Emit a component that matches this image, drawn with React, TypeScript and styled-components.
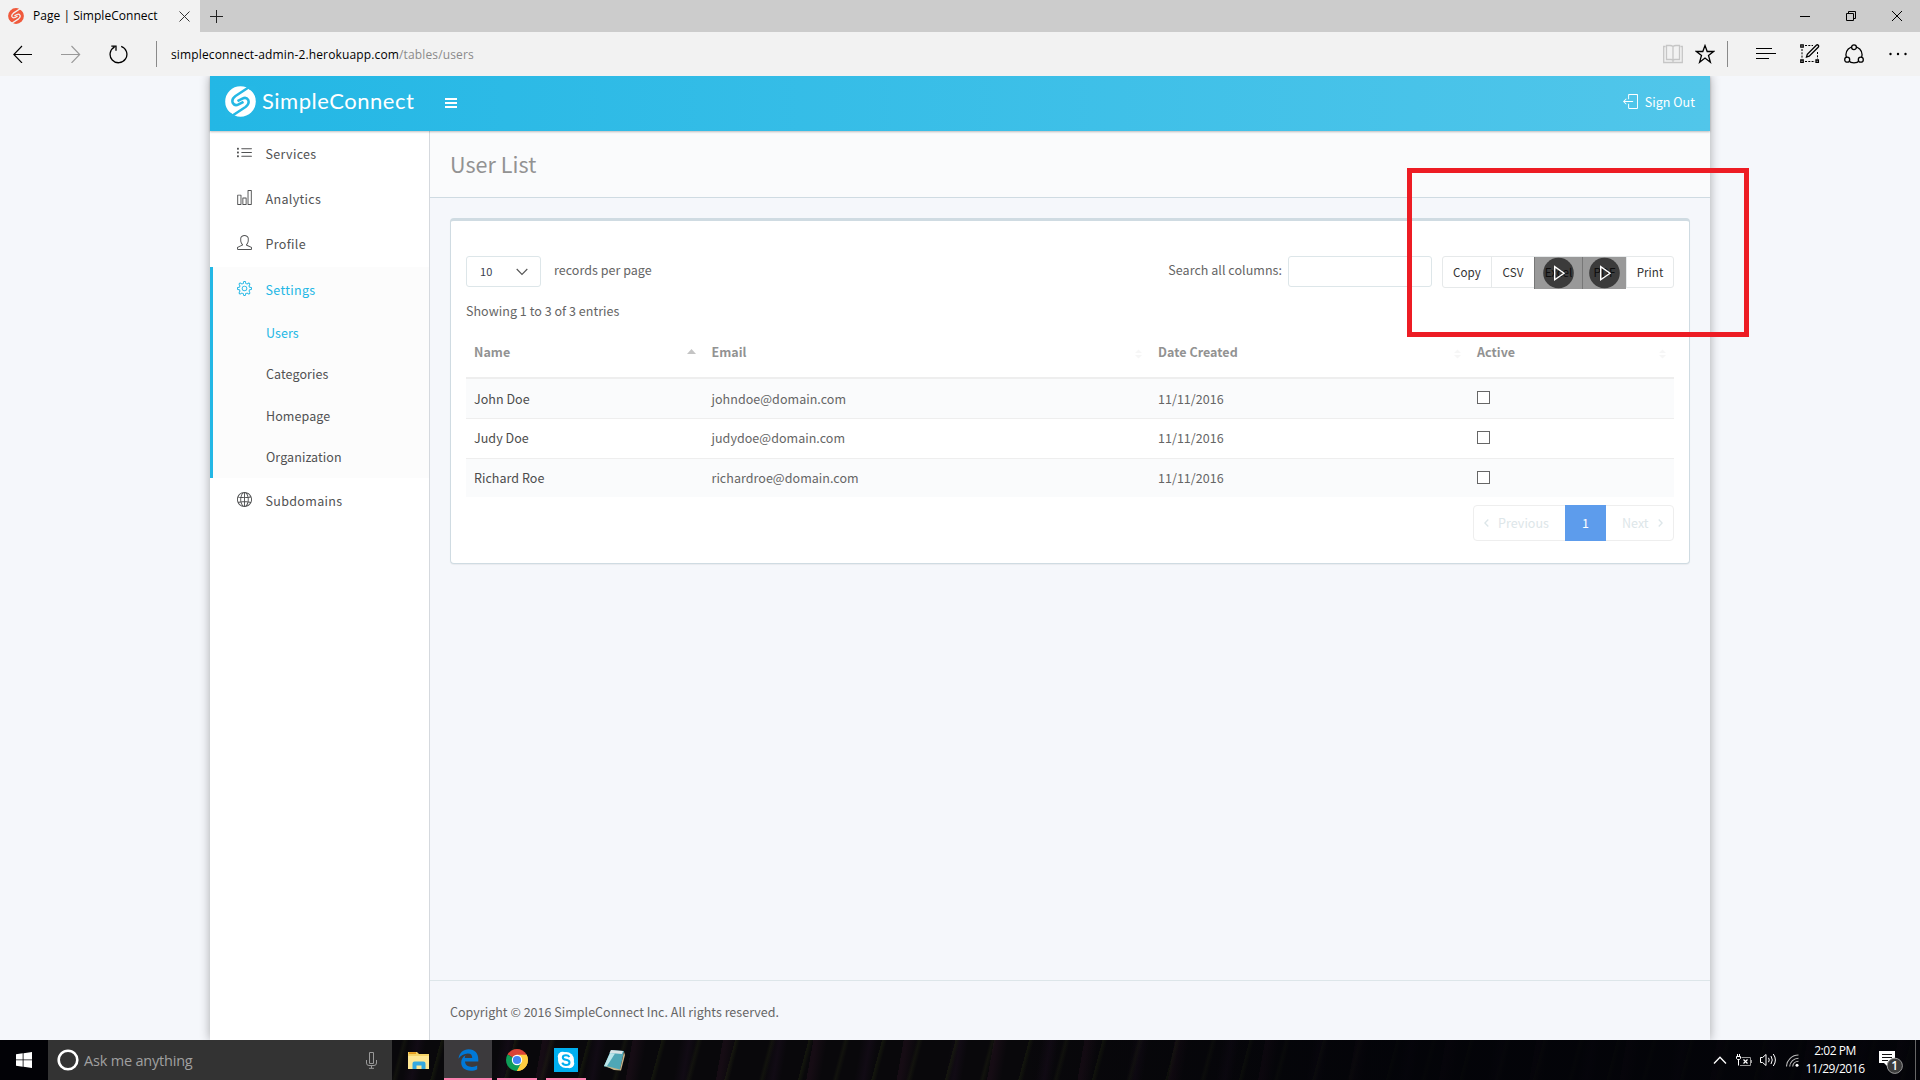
import styled, { createGlobalStyle } from 'styled-components';
import {
    SlChart,
    SlGlobe,
    SlList,
    SlLogout,
    SlSettings,
    SlUser
} from 'react-icons/sl';

const SOURCE_FONT = "'Noto Sans CJK SC', 'Open Sans', sans-serif";
const SYSTEM_FONT = "'Open Sans', 'Noto Sans', sans-serif";
const ACCENT = '#23b7e5';

const GlobalStyle = createGlobalStyle`
    * {
        box-sizing: border-box;
    }

    body {
        margin: 0;
        overflow: hidden;
        background: #f5f7fa;
    }

    svg {
        display: block;
        flex: none;
    }
`;

const Screen = styled.div`
    position: relative;
    display: flex;
    flex-direction: column;
    width: 1920px;
    height: 1080px;
    overflow: hidden;
`;

/* browser chrome */

const TitleBar = styled.div`
    display: flex;
    height: 32px;
    flex: none;
    background: #ccc;
`;

const Tab = styled.div`
    display: flex;
    align-items: center;
    width: 200px;
    padding-left: 8px;
    background: #f2f2f2;
    font: 12px/34px ${SYSTEM_FONT};
    letter-spacing: 0.03px;
    color: #000;
`;

const TabTitle = styled.span`
    width: 146px;
    margin-left: 9px;
    white-space: nowrap;
`;

const NewTab = styled.div`
    padding: 10px 0 0 10px;
`;

const WindowButtons = styled.div`
    display: flex;
    align-items: center;
    gap: 36px;
    margin-left: auto;
    padding-right: 18px;
`;

const Toolbar = styled.div`
    display: flex;
    align-items: center;
    height: 44px;
    flex: none;
    padding: 0 13px;
    background: #f2f2f2;
`;

const NavButtons = styled.div`
    display: flex;
    align-items: center;
    gap: 28px;
`;

const Divider = styled.div`
    width: 1px;
    height: 26px;
    background: #8a8a8a;
`;

const Address = styled.div`
    padding: 1px 0 0 14px;
    font: 12px/20px ${SYSTEM_FONT};
    letter-spacing: 0.14px;
    color: #000;
`;

const AddressPath = styled.span`
    color: #8a8a8a;
`;

const ToolbarActions = styled.div`
    display: flex;
    align-items: center;
    margin-left: auto;
`;

const Action = styled.div<{ $gap: number }>`
    margin-left: ${({ $gap }) => $gap}px;
`;

/* page */

const Page = styled.div`
    display: flex;
    justify-content: center;
    height: 964px;
    overflow: hidden;
    background: #f5f7fb;
    font: 12.5px/20px ${SOURCE_FONT};
    letter-spacing: 0.04px;
    color: #656565;
`;

const Wrapper = styled.div`
    display: flex;
    flex-direction: column;
    width: 1500px;
    box-shadow: 0 0 10px rgba(0, 0, 0, 0.32);
`;

const TopNav = styled.header`
    position: relative;
    display: flex;
    align-items: center;
    height: 55px;
    flex: none;
    padding: 0 15px 2px;
    background: linear-gradient(to right, #23b7e5, #51c6ea);
    box-shadow: 0 1px 2px rgba(0, 0, 0, 0.25);
    color: #fff;
`;

const Brand = styled.div`
    display: flex;
    align-items: center;
    width: 220px;
    padding-bottom: 3px;
    gap: 6px;
    font: 22px/30px Lato, sans-serif;
    letter-spacing: 0.5px;
`;

const SignOut = styled.div`
    display: flex;
    align-items: center;
    gap: 7px;
    margin-left: auto;
    padding-bottom: 2px;
`;

const Body = styled.div`
    display: flex;
    flex: 1;
`;

const Sidebar = styled.nav`
    width: 220px;
    border-right: 1px solid #d5d9de;
    background: #fff;
    color: #515253;
    letter-spacing: 0.33px;
`;

const MenuItem = styled.div<{ $active?: boolean }>`
    display: flex;
    align-items: center;
    height: 45px;
    padding-left: ${({ $active }) => ($active ? 24 : 27)}px;
    gap: 13.5px;
    color: ${({ $active }) => ($active ? ACCENT : 'inherit')};

    svg {
        margin-bottom: 2px;
    }
`;

const MenuGroup = styled.div`
    margin-top: 1px;
    height: 211px;
    border-left: 3px solid ${ACCENT};
    background: #fcfcfc;
`;

const SubItem = styled.div<{ $active?: boolean }>`
    height: 41.4px;
    padding-left: 53px;
    line-height: 41.2px;
    letter-spacing: 0.08px;
    color: ${({ $active }) => ($active ? ACCENT : 'inherit')};
`;

const Content = styled.main`
    display: flex;
    flex: 1;
    flex-direction: column;
    background: #f5f7fb;
`;

const Heading = styled.h1`
    height: 67px;
    margin: 0;
    padding-left: 20px;
    border-bottom: 1px solid #cfdbe2;
    background: #fafbfc;
    font: 21.5px/66px ${SOURCE_FONT};
    letter-spacing: 0.06px;
    color: #929292;
`;

const Card = styled.section`
    height: 346px;
    margin: 20px 20px 0;
    padding: 35px 15px 0;
    border: 1px solid #cfdbe2;
    border-top-width: 3px;
    border-radius: 4px;
    background: #fff;
    box-shadow: 0 1px 1px rgba(0, 0, 0, 0.05);
`;

const Controls = styled.div`
    display: flex;
    height: 33px;
`;

const Select = styled.div`
    display: flex;
    align-items: center;
    justify-content: space-between;
    width: 75px;
    height: 31px;
    padding: 0 12px 2px 13px;
    border: 1px solid #dde6e9;
    border-radius: 3px;
    font-size: 11px;
    color: #3a3f51;

    svg {
        margin-top: 2px;
    }
`;

const ControlLabel = styled.span`
    line-height: 28px;
    white-space: nowrap;

    &:first-of-type {
        margin: 0 auto 0 13px;
    }
`;

const SearchInput = styled.input`
    width: 144px;
    height: 31px;
    margin: 0 10px 0 6px;
    border: 1px solid #dde6e9;
    border-radius: 3px;
`;

const ButtonGroup = styled.div`
    display: flex;
    height: 32px;
    border: 1px solid #e6e9ea;
    border-radius: 3px;
`;

const ExportButton = styled.div<{ $width: number; $blocked?: boolean }>`
    position: relative;
    width: ${({ $width }) => $width}px;
    height: ${({ $blocked }) => ($blocked ? 32 : 30)}px;
    border-left: 1px solid ${({ $blocked }) => ($blocked ? '#777' : '#e6e9ea')};
    background: ${({ $blocked }) => ($blocked ? '#999' : 'none')};
    font-size: 11.6px;
    line-height: 31px;
    text-align: center;
    color: ${({ $blocked }) => ($blocked ? '#000' : '#333')};

    &:first-child {
        border-left: 0;
    }
`;

const PlayOverlay = styled.svg`
    position: absolute;
    top: 0;
    left: 50%;
    margin-left: -15.5px;
`;

const Info = styled.div`
    height: 41px;
    padding-top: 12px;
`;

const Row = styled.div<{ $striped?: boolean }>`
    display: grid;
    grid-template-columns: 237.5px 446.5px 319px 205px;
    height: 40px;
    border-bottom: 1px solid #eee;
    background: ${({ $striped }) => ($striped ? '#fafbfc' : '#fff')};
    line-height: 39px;

    & + & {
        line-height: 37px;
    }

    &:last-child {
        height: 38px;
        border-bottom: 0;
    }
`;

const HeaderRow = styled.div`
    display: grid;
    grid-template-columns: 237.5px 446.5px 319px 205px;
    height: 49px;
    border-bottom: 2px solid #eee;
    line-height: 44px;
    font-weight: 700;
    color: #929292;
`;

const Cell = styled.div<{ $dark?: boolean }>`
    display: flex;
    justify-content: space-between;
    padding: 0 8px;
    color: ${({ $dark }) => ($dark ? '#4c4c4c' : 'inherit')};
`;

const SortIcon = styled.svg`
    margin-top: 17px;
`;

const Checkbox = styled.div`
    width: 13px;
    height: 13px;
    margin-top: 12px;
    border: 1px solid #666;
    background: #fff;
`;

const Pagination = styled.div`
    display: flex;
    width: 201px;
    height: 36px;
    margin: 8px 0 0 auto;
    border: 1px solid #eee;
    border-radius: 4px;
    line-height: 34px;
    color: #dde6e9;
`;

const PageLink = styled.div<{ $width: number }>`
    display: flex;
    width: ${({ $width }) => $width}px;
    align-items: center;
    justify-content: space-between;
    padding: 0 16px 0 10px;

    &:last-child {
        padding: 0 10px 0 16px;
    }
`;

const CurrentPage = styled.div`
    width: 41px;
    margin: -1px 0;
    background: #5d9cec;
    line-height: 36px;
    text-align: center;
    color: #fff;
`;

const Footer = styled.footer`
    height: 60px;
    margin-top: auto;
    padding: 21px 20px;
    border-top: 1px solid #dde6e9;
    letter-spacing: 0.02px;
`;

const Highlight = styled.div`
    position: absolute;
    top: 168px;
    left: 1407px;
    width: 342px;
    height: 169px;
    border: 5px solid #ed1c24;
`;

/* taskbar */

const Taskbar = styled.div`
    display: flex;
    height: 40px;
    background:
        linear-gradient(to right, transparent 1000px, rgba(2, 3, 8, 0.8) 1400px),
        repeating-linear-gradient(
            105deg,
            rgba(48, 60, 18, 0.24) 0 1px,
            transparent 5px 33px,
            rgba(52, 60, 22, 0.2) 36px,
            transparent 40px 71px
        ),
        repeating-linear-gradient(
            100deg,
            rgba(58, 24, 46, 0.26) 0 3px,
            transparent 14px 47px,
            rgba(44, 20, 50, 0.24) 56px,
            transparent 64px 89px
        ),
        #09080b;
    font-family: ${SYSTEM_FONT};
`;

const StartButton = styled.div`
    width: 48px;
    padding: 12px 16px;
    background: #020206;
`;

const SearchBox = styled.div`
    display: flex;
    align-items: center;
    width: 344px;
    padding: 0 15px 0 8px;
    background: #333;
    font-size: 14.5px;
    letter-spacing: -0.2px;
    color: #a0a0a0;

    svg:last-child {
        margin-left: auto;
    }
`;

const SearchText = styled.span`
    margin-left: 4px;
    white-space: nowrap;
`;

const AppButton = styled.div<{ $width: number; $gap?: number; $open?: boolean; $focused?: boolean }>`
    display: flex;
    align-items: center;
    justify-content: center;
    width: ${({ $width }) => $width}px;
    margin-left: ${({ $gap = 0 }) => $gap}px;
    border-bottom: 2px solid ${({ $open }) => ($open ? '#fb80ae' : 'transparent')};
    background: ${({ $focused }) => ($focused ? '#3c3a3d' : 'none')};
    background-clip: padding-box;
    padding-top: 2px;
`;

const Tray = styled.div`
    display: flex;
    align-items: center;
    margin-left: auto;
    color: #fff;
`;

const Clock = styled.div`
    width: 62px;
    margin: 0 13px 0 5px;
    font-size: 12px;
    line-height: 18px;
    letter-spacing: -0.45px;
    text-align: center;
    white-space: nowrap;
`;

const ShowDesktop = styled.div`
    width: 5px;
    height: 40px;
    margin-left: 12px;
    border-left: 1px solid #666;
`;

const Logo = ({ size, color, gap }: { size: number; color: string; gap: string }) => (
    <svg width={size} height={size} viewBox="0 0 31 31">
        <circle cx="15.5" cy="15.5" r="15.3" fill={color} />
        <g fill="none" stroke={gap} strokeWidth="2.5" strokeLinejoin="round">
            <path d="M25 .5 L10.5 10 Q6.2 13.2 7.8 17 Q9.8 20.4 13.6 18.4 L18.5 15.8" />
            <path d="M6 30.5 L20.5 21 Q24.8 17.8 23.2 14 Q21.2 10.6 17.4 12.6 L12.5 15.2" />
        </g>
        <path d="M20 0 H31 V10 Q28 5 24.5 3.8 Z M11 31 H0 V21 Q3 26 6.5 27.2 Z" fill={gap} />
    </svg>
);

const menu = [
    { label: 'Services', Icon: SlList },
    { label: 'Analytics', Icon: SlChart },
    { label: 'Profile', Icon: SlUser }
];

const settings = ['Users', 'Categories', 'Homepage', 'Organization'];

const columns = ['Name', 'Email', 'Date Created', 'Active'];

const users = [
    { name: 'John Doe', email: 'johndoe@domain.com', created: '11/11/2016' },
    { name: 'Judy Doe', email: 'judydoe@domain.com', created: '11/11/2016' },
    { name: 'Richard Roe', email: 'richardroe@domain.com', created: '11/11/2016' }
];

const exportButtons = [
    { label: 'Copy', width: 48 },
    { label: 'CSV', width: 43 },
    { label: 'Excel', width: 48, blocked: true },
    { label: 'PDF', width: 44, blocked: true },
    { label: 'Print', width: 47 }
];

const BrowserChrome = () => (
    <>
        <TitleBar>
            <Tab>
                <Logo size={16} color="#f05a3c" gap="#f2f2f2" />
                <TabTitle>Page | SimpleConnect</TabTitle>
                <svg width="11" height="11" stroke="#333" fill="none">
                    <path d="M.5 .5 L10.5 10.5 M10.5 .5 L.5 10.5" />
                </svg>
            </Tab>
            <NewTab>
                <svg width="13" height="13" stroke="#222">
                    <path d="M6.5 0 V13 M0 6.5 H13" />
                </svg>
            </NewTab>
            <WindowButtons>
                <svg width="10" height="10" stroke="#000">
                    <path d="M0 5.5 H10" />
                </svg>
                <svg width="10" height="10" stroke="#000" fill="none">
                    <path d="M.5 2.5 H7.5 V9.5 H.5 Z M2.5 2.5 V.5 H9.5 V7.5 H7.5" />
                </svg>
                <svg width="10" height="10" stroke="#000">
                    <path d="M0 0 L10 10 M10 0 L0 10" />
                </svg>
            </WindowButtons>
        </TitleBar>
        <Toolbar>
            <NavButtons>
                <svg width="20" height="18" stroke="#000" strokeWidth="1.1" fill="none">
                    <path d="M1 9.5 H19 M9 1 L.8 9.5 L9 18" />
                </svg>
                <svg width="20" height="18" stroke="#999" strokeWidth="1.1" fill="none">
                    <path d="M0 9.5 H18.5 M10.5 1 L18.7 9.5 L10.5 18" />
                </svg>
                <svg width="19" height="19" stroke="#000" strokeWidth="1.3" fill="none">
                    <path d="M12.2 1.4 A8.4 8.4 0 1 1 5.6 1.9 M2.3 1.1 H7 V5.8" />
                </svg>
                <Divider />
            </NavButtons>
            <Address>
                simpleconnect-admin-2.herokuapp.com
                <AddressPath>/tables/users</AddressPath>
            </Address>
            <ToolbarActions>
                <Action $gap={0}>
                    <svg width="20" height="20" stroke="#c6c6c6" fill="none">
                        <path d="M2.5 2.5 H.7 V18.5 H19.3 V2.5 H17.5 M10 2.5 V18 M10 2.5 Q9 1.5 7 1.5 H3.5 V15.5 H8 Q9.5 15.5 10 16.5 Q10.5 15.5 12 15.5 H16.5 V1.5 H13 Q11 1.5 10 2.5" strokeWidth="1.3" />
                    </svg>
                </Action>
                <Action $gap={12}>
                    <svg width="20" height="20" stroke="#000" strokeWidth="1.3" fill="none">
                        <path d="M10 1.6 L12.2 7.5 H18.6 L13.5 11.4 L15.4 18.2 L10 14.1 L4.6 18.2 L6.5 11.4 L1.4 7.5 H7.8 Z" />
                    </svg>
                </Action>
                <Action $gap={12}>
                    <Divider />
                </Action>
                <Action $gap={28}>
                    <svg width="20" height="14" stroke="#000" strokeWidth="1.1">
                        <path d="M0 1.5 H16 M0 6.5 H20 M0 11.5 H13" />
                    </svg>
                </Action>
                <Action $gap={24}>
                    <svg width="20" height="20" stroke="#000" fill="none">
                        <path d="M5 1.5 H13 M2 5 V15 M17.5 8 V15 M5 17.5 H15" strokeDasharray="2 1.3" />
                        <path d="M.8 .8 H3.2 V3.2 H.8 Z M.8 16 H3.2 V18.4 H.8 Z M16 16 H18.4 V18.4 H16 Z" strokeWidth="1.3" />
                        <path d="M6.5 13 L7.3 10.3 L16.3 1.2 Q17.5 .3 18.4 1.4 Q19 2.4 18.2 3.2 L9.2 12.2 Z" strokeWidth="1.3" />
                    </svg>
                </Action>
                <Action $gap={24}>
                    <svg width="20" height="20" stroke="#000" strokeWidth="1.3" fill="#f2f2f2">
                        <circle cx="10" cy="10.7" r="8.1" />
                        <circle cx="10" cy="3.2" r="2.4" />
                        <circle cx="3.2" cy="15.7" r="2.5" />
                        <circle cx="16.8" cy="15.7" r="2.5" />
                    </svg>
                </Action>
                <Action $gap={25}>
                    <svg width="18" height="4">
                        <circle cx="1.5" cy="2" r="1.2" />
                        <circle cx="9" cy="2" r="1.2" />
                        <circle cx="16.5" cy="2" r="1.2" />
                    </svg>
                </Action>
            </ToolbarActions>
        </Toolbar>
    </>
);

const UserTable = () => (
    <div>
        <HeaderRow>
            {columns.map((column, i) => (
                <Cell key={column}>
                    {column}
                    {i === 0 ? (
                        <SortIcon width="9" height="9" fill="#c4c4c4">
                            <path d="M0 7 L4.5 2 L9 7 Z" />
                        </SortIcon>
                    ) : (
                        <SortIcon width="7" height="13" fill="#f6f6f6">
                            <path d="M0 6 L3.5 2.5 L7 6 Z M0 8 L3.5 11.5 L7 8 Z" />
                        </SortIcon>
                    )}
                </Cell>
            ))}
        </HeaderRow>
        {users.map(({ name, email, created }, i) => (
            <Row key={name} $striped={i % 2 === 0}>
                <Cell $dark>{name}</Cell>
                <Cell>{email}</Cell>
                <Cell>{created}</Cell>
                <Cell>
                    <Checkbox />
                </Cell>
            </Row>
        ))}
    </div>
);

const WindowsTaskbar = () => (
    <Taskbar>
        <StartButton>
            <svg width="16" height="16" fill="#fff">
                <path d="M0 2.3 L6.7 1.3 V7.5 H0 Z M7.5 1.2 L16 0 V7.5 H7.5 Z M0 8.3 H6.7 V14.7 L0 13.7 Z M7.5 8.3 H16 V16 L7.5 14.8 Z" />
            </svg>
        </StartButton>
        <SearchBox>
            <svg width="24" height="24" fill="none" stroke="#fff" strokeWidth="2.6">
                <circle cx="12" cy="12" r="9.3" />
            </svg>
            <SearchText>Ask me anything</SearchText>
            <svg width="11" height="17" fill="none" stroke="#999">
                <path d="M3.5 .5 H7.5 V11.5 H3.5 Z M.5 8 V11 Q.5 13.5 3 13.5 H8 Q10.5 13.5 10.5 11 V8 M5.5 13.5 V16 M3 16.3 H8" />
            </svg>
        </SearchBox>
        <AppButton $width={52}>
            <svg width="22" height="19" viewBox="-1 0 22 19">
                <path d="M0 1 H9 L11 3 H22 V18 H0 Z" fill="#f6d468" />
                <path d="M1 1.2 H8 V3 H1 Z" fill="#e59b1c" />
                <path d="M0 5 H22 V18 H0 Z" fill="#ffe794" />
                <path d="M4.5 18 V12.5 Q4.5 10.5 6.5 10.5 H15.5 Q17.5 10.5 17.5 12.5 V18 H13.5 V14.5 H8.5 V18 Z" fill="#35a8e0" />
            </svg>
        </AppButton>
        <AppButton $width={48} $open $focused>
            <svg width="21" height="22" viewBox="0 0 21 22" fill="#0078d7">
                <path d="M.5 9.8 C1.3 4 5.2 .3 10.7 .3 C16.8 .3 20.3 4.5 20.3 10.4 V12.6 H7 C7.2 16.5 10.5 18 14 18 C16.2 18 17.9 17.4 19.2 16.6 V20.2 C17.5 21.2 15.2 21.8 12.8 21.8 C6.7 21.8 3.2 18.4 3.2 13.6 C3.2 10.3 4.9 7.7 7.6 6.3 C7 7.2 6.9 8.1 6.8 8.9 H14.2 C14.2 6 12.8 4.5 9.9 4.5 C6 4.5 2.7 6.6 .5 9.8 Z" />
            </svg>
        </AppButton>
        <AppButton $width={40} $gap={5} $open>
            <svg width="22" height="22" viewBox="0 0 22 22">
                <path d="M11 11 L1.5 5.5 A11 11 0 0 1 20.5 5.5 Z" fill="#db4437" />
                <path d="M11 11 L20.5 5.5 A11 11 0 0 1 11 22 Z" fill="#ffcd40" />
                <path d="M11 11 L11 22 A11 11 0 0 1 1.5 5.5 Z" fill="#0f9d58" />
                <path d="M11 5.8 H20.7 Q17 3 11 3 Z" fill="#db4437" />
                <path d="M6.4 13.5 L11 22 L15.6 13.5 Z" fill="#0f9d58" />
                <path d="M15.6 13.5 L11 22 H12 A11 11 0 0 0 20.6 5.8 H11 Z" fill="#ffcd40" />
                <circle cx="11" cy="11" r="5.2" fill="#fff" />
                <circle cx="11" cy="11" r="4.1" fill="#4285f4" />
            </svg>
        </AppButton>
        <AppButton $width={40} $gap={9} $open>
            <svg width="24" height="24">
                <path d="M0 0 H24 V24 H0 Z" fill="#00aff0" />
                <g fill="#fff">
                    <circle cx="12" cy="12" r="8" />
                    <circle cx="8.5" cy="8.5" r="4.7" />
                    <circle cx="15.5" cy="15.5" r="4.7" />
                </g>
                <path d="M15.4 9 Q14.4 7.2 12 7.2 Q8.8 7.2 8.8 9.4 Q8.8 11.2 12 11.8 Q15.5 12.5 15.5 14.4 Q15.5 16.9 12 16.9 Q9 16.9 8.3 14.6" fill="none" stroke="#00aff0" strokeWidth="2" />
            </svg>
        </AppButton>
        <AppButton $width={40} $gap={8}>
            <svg width="24" height="22">
                <path d="M9 1 L22 2 L18 21 L2 17.5 Z" fill="#4fa7b6" />
                <path d="M9 1 L21 2 L20 5 L7.5 4 Z" fill="#d9e4e6" />
                <path d="M8 4 L13 4.5 L5 17 L2 17 Z" fill="#b9e5ea" />
                <path d="M2 16.5 L18 20.5 L22 3 L23 6 L19 21.5 L12 21 Z" fill="#c8b48a" />
            </svg>
        </AppButton>
        <Tray>
            <svg width="14" height="10" fill="none" stroke="#fff" strokeWidth="1.3">
                <path d="M1 8.5 L7 2.2 L13 8.5" />
            </svg>
            <Action $gap={9}>
                <svg width="17" height="14" fill="none" stroke="#fff">
                    <path d="M5.5 4.5 H14.5 V12.5 H4" stroke="#999" />
                    <path d="M15.5 7 V10" stroke="#999" />
                    <path d="M1.5 1 V4 M3.5 1 V4 M2.5 7 V12.5" />
                    <path d="M.5 3.5 H4.5 V5.5 L3.5 6.5 H1.5 L.5 5.5 Z" />
                    <path d="M7.5 6.5 L11.5 10.5 M11.5 6.5 L7.5 10.5" strokeWidth="1.2" />
                </svg>
            </Action>
            <Action $gap={7}>
                <svg width="17" height="14" fill="none" stroke="#fff">
                    <path d="M.5 4.5 H2.5 L6 1.5 V12.5 L2.5 9.5 H.5 Z M8.5 4.8 Q10 7 8.5 9.2 M11 3 Q13.5 7 11 11 M13.3 1 Q17.5 7 13.3 13" />
                </svg>
            </Action>
            <Action $gap={9}>
                <svg width="13" height="13" fill="none" stroke="#bbb" strokeWidth="1.1">
                    <path d="M.5 12.5 A12 12 0 0 1 12.5 1 M3.7 12.5 A8.8 8.8 0 0 1 12.5 4.2 M6.7 12.5 A5.8 5.8 0 0 1 12.5 7.2" />
                    <circle cx="11" cy="11.3" r="1.5" fill="#fff" stroke="none" />
                </svg>
            </Action>
            <Clock>
                2:02 PM
                <br />
                11/29/2016
            </Clock>
            <svg width="24" height="28" viewBox="0 0 24 28">
                <path d="M0 5 H16 V17 H9 V21 L5 17 H0 Z" fill="#fff" />
                <path d="M3 8.5 H13 M3 11.5 H13 M3 14.5 H9" stroke="#111" />
                <circle cx="15.8" cy="19.8" r="7.6" fill="#3c3c3c" stroke="#999" />
                <text x="15.8" y="24.2" textAnchor="middle" fontSize="12" fontFamily={SYSTEM_FONT} fontWeight="600" fill="#fff">
                    1
                </text>
            </svg>
            <ShowDesktop />
        </Tray>
    </Taskbar>
);

const App = () => (
    <Screen>
        <GlobalStyle />
        <BrowserChrome />
        <Page>
            <Wrapper>
                <TopNav>
                    <Brand>
                        <Logo size={31} color="#fff" gap="#25b8e5" />
                        SimpleConnect
                    </Brand>
                    <svg width="12" height="10" fill="#fff">
                        <path d="M0 0 H12 V2 H0 Z M0 4 H12 V6 H0 Z M0 8 H12 V10 H0 Z" />
                    </svg>
                    <SignOut>
                        <SlLogout size={15} />
                        Sign Out
                    </SignOut>
                </TopNav>
                <Body>
                    <Sidebar>
                        {menu.map(({ label, Icon }) => (
                            <MenuItem key={label}>
                                <Icon size={15} />
                                {label}
                            </MenuItem>
                        ))}
                        <MenuGroup>
                            <MenuItem $active>
                                <SlSettings size={15} />
                                Settings
                            </MenuItem>
                            {settings.map(label => (
                                <SubItem key={label} $active={label === 'Users'}>
                                    {label}
                                </SubItem>
                            ))}
                        </MenuGroup>
                        <MenuItem>
                            <SlGlobe size={15} />
                            Subdomains
                        </MenuItem>
                    </Sidebar>
                    <Content>
                        <Heading>User List</Heading>
                        <Card>
                            <Controls>
                                <Select>
                                    10
                                    <svg width="12" height="8" fill="none" stroke="#555" strokeWidth="1.1">
                                        <path d="M.7 1 L6 6.5 L11.3 1" />
                                    </svg>
                                </Select>
                                <ControlLabel>records per page</ControlLabel>
                                <ControlLabel>Search all columns:</ControlLabel>
                                <SearchInput />
                                <ButtonGroup>
                                    {exportButtons.map(({ label, width, blocked }) => (
                                        <ExportButton key={label} $width={width} $blocked={blocked}>
                                            {label}
                                            {blocked && (
                                                <PlayOverlay width="31" height="32">
                                                    <circle cx="15.5" cy="16" r="15.3" fill="#121212" fillOpacity=".7" />
                                                    <path d="M11.7 9.7 V22.7 L21 16.2 Z" fill="none" stroke="#fff" strokeWidth="1.4" />
                                                </PlayOverlay>
                                            )}
                                        </ExportButton>
                                    ))}
                                </ButtonGroup>
                            </Controls>
                            <Info>Showing 1 to 3 of 3 entries</Info>
                            <UserTable />
                            <Pagination>
                                <PageLink $width={91}>
                                    <svg width="5" height="8" fill="none" stroke="#dde6e9" strokeWidth="1.3">
                                        <path d="M4.3 .5 L.9 4 L4.3 7.5" />
                                    </svg>
                                    Previous
                                </PageLink>
                                <CurrentPage>1</CurrentPage>
                                <PageLink $width={67}>
                                    Next
                                    <svg width="5" height="8" fill="none" stroke="#dde6e9" strokeWidth="1.3">
                                        <path d="M.7 .5 L4.1 4 L.7 7.5" />
                                    </svg>
                                </PageLink>
                            </Pagination>
                        </Card>
                        <Footer>Copyright © 2016 SimpleConnect Inc. All rights reserved.</Footer>
                    </Content>
                </Body>
            </Wrapper>
        </Page>
        <WindowsTaskbar />
        <Highlight />
    </Screen>
);

export default App;
